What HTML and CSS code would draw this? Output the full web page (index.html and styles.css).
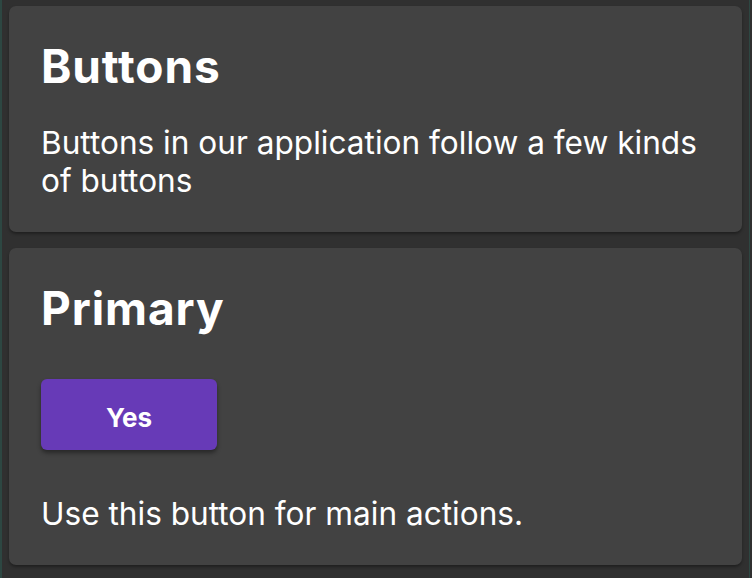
FILE: index.html
```html
<!DOCTYPE html>
<html lang="en">
<head>
<meta charset="utf-8">
<link rel="stylesheet" href="styles.css">
</head>
<body>
<main class="page">
  <section class="card">
    <h1 class="title">Buttons</h1>
    <p class="text intro">Buttons in our application follow a few kinds of buttons</p>
  </section>
  <section class="card">
    <h2 class="title">Primary</h2>
    <div class="demo">
      <button class="btn-primary">Yes</button>
    </div>
    <p class="text">Use this button for main actions.</p>
  </section>
</main>
</body>
</html>
```

FILE: styles.css
```css
html, body {
  margin: 0;
  padding: 0;
  height: 100%;
}
body {
  background: #303030;
  font-family: Inter, "Noto Sans", sans-serif;
  color: #ffffff;
  border-left: 2px solid #2d4742;
  box-sizing: border-box;
}
.page {
  display: flex;
  flex-direction: column;
  gap: 16px;
  padding: 6px 7px 0 7px;
  border-right: 1px solid #2d4742;
  margin-right: 2px;
  min-height: 100%;
  box-sizing: border-box;
}
.card {
  background: #424242;
  border-radius: 7px;
  padding: 31px 32px 32px 32px;
  box-shadow: 0 2px 3px rgba(0,0,0,0.35);
}
.title {
  margin: 0;
  font-size: 46px;
  font-weight: 700;
  line-height: 58px;
  letter-spacing: 0.9px;
}
.text {
  margin: 0;
  font-size: 31.6px;
  font-weight: 400;
  line-height: 38px;
}
.intro {
  margin-top: 29px;
}
.demo {
  margin-top: 42px;
  margin-bottom: 45px;
}
.btn-primary {
  display: block;
  width: 176px;
  height: 71px;
  padding: 6px 0 0;
  border: none;
  border-radius: 6px;
  background: #673ab7;
  color: #ffffff;
  font-family: Inter, "Noto Sans", sans-serif;
  font-size: 26px;
  font-weight: 700;
  box-shadow: 0 3px 4px rgba(0,0,0,0.4);
}
```
